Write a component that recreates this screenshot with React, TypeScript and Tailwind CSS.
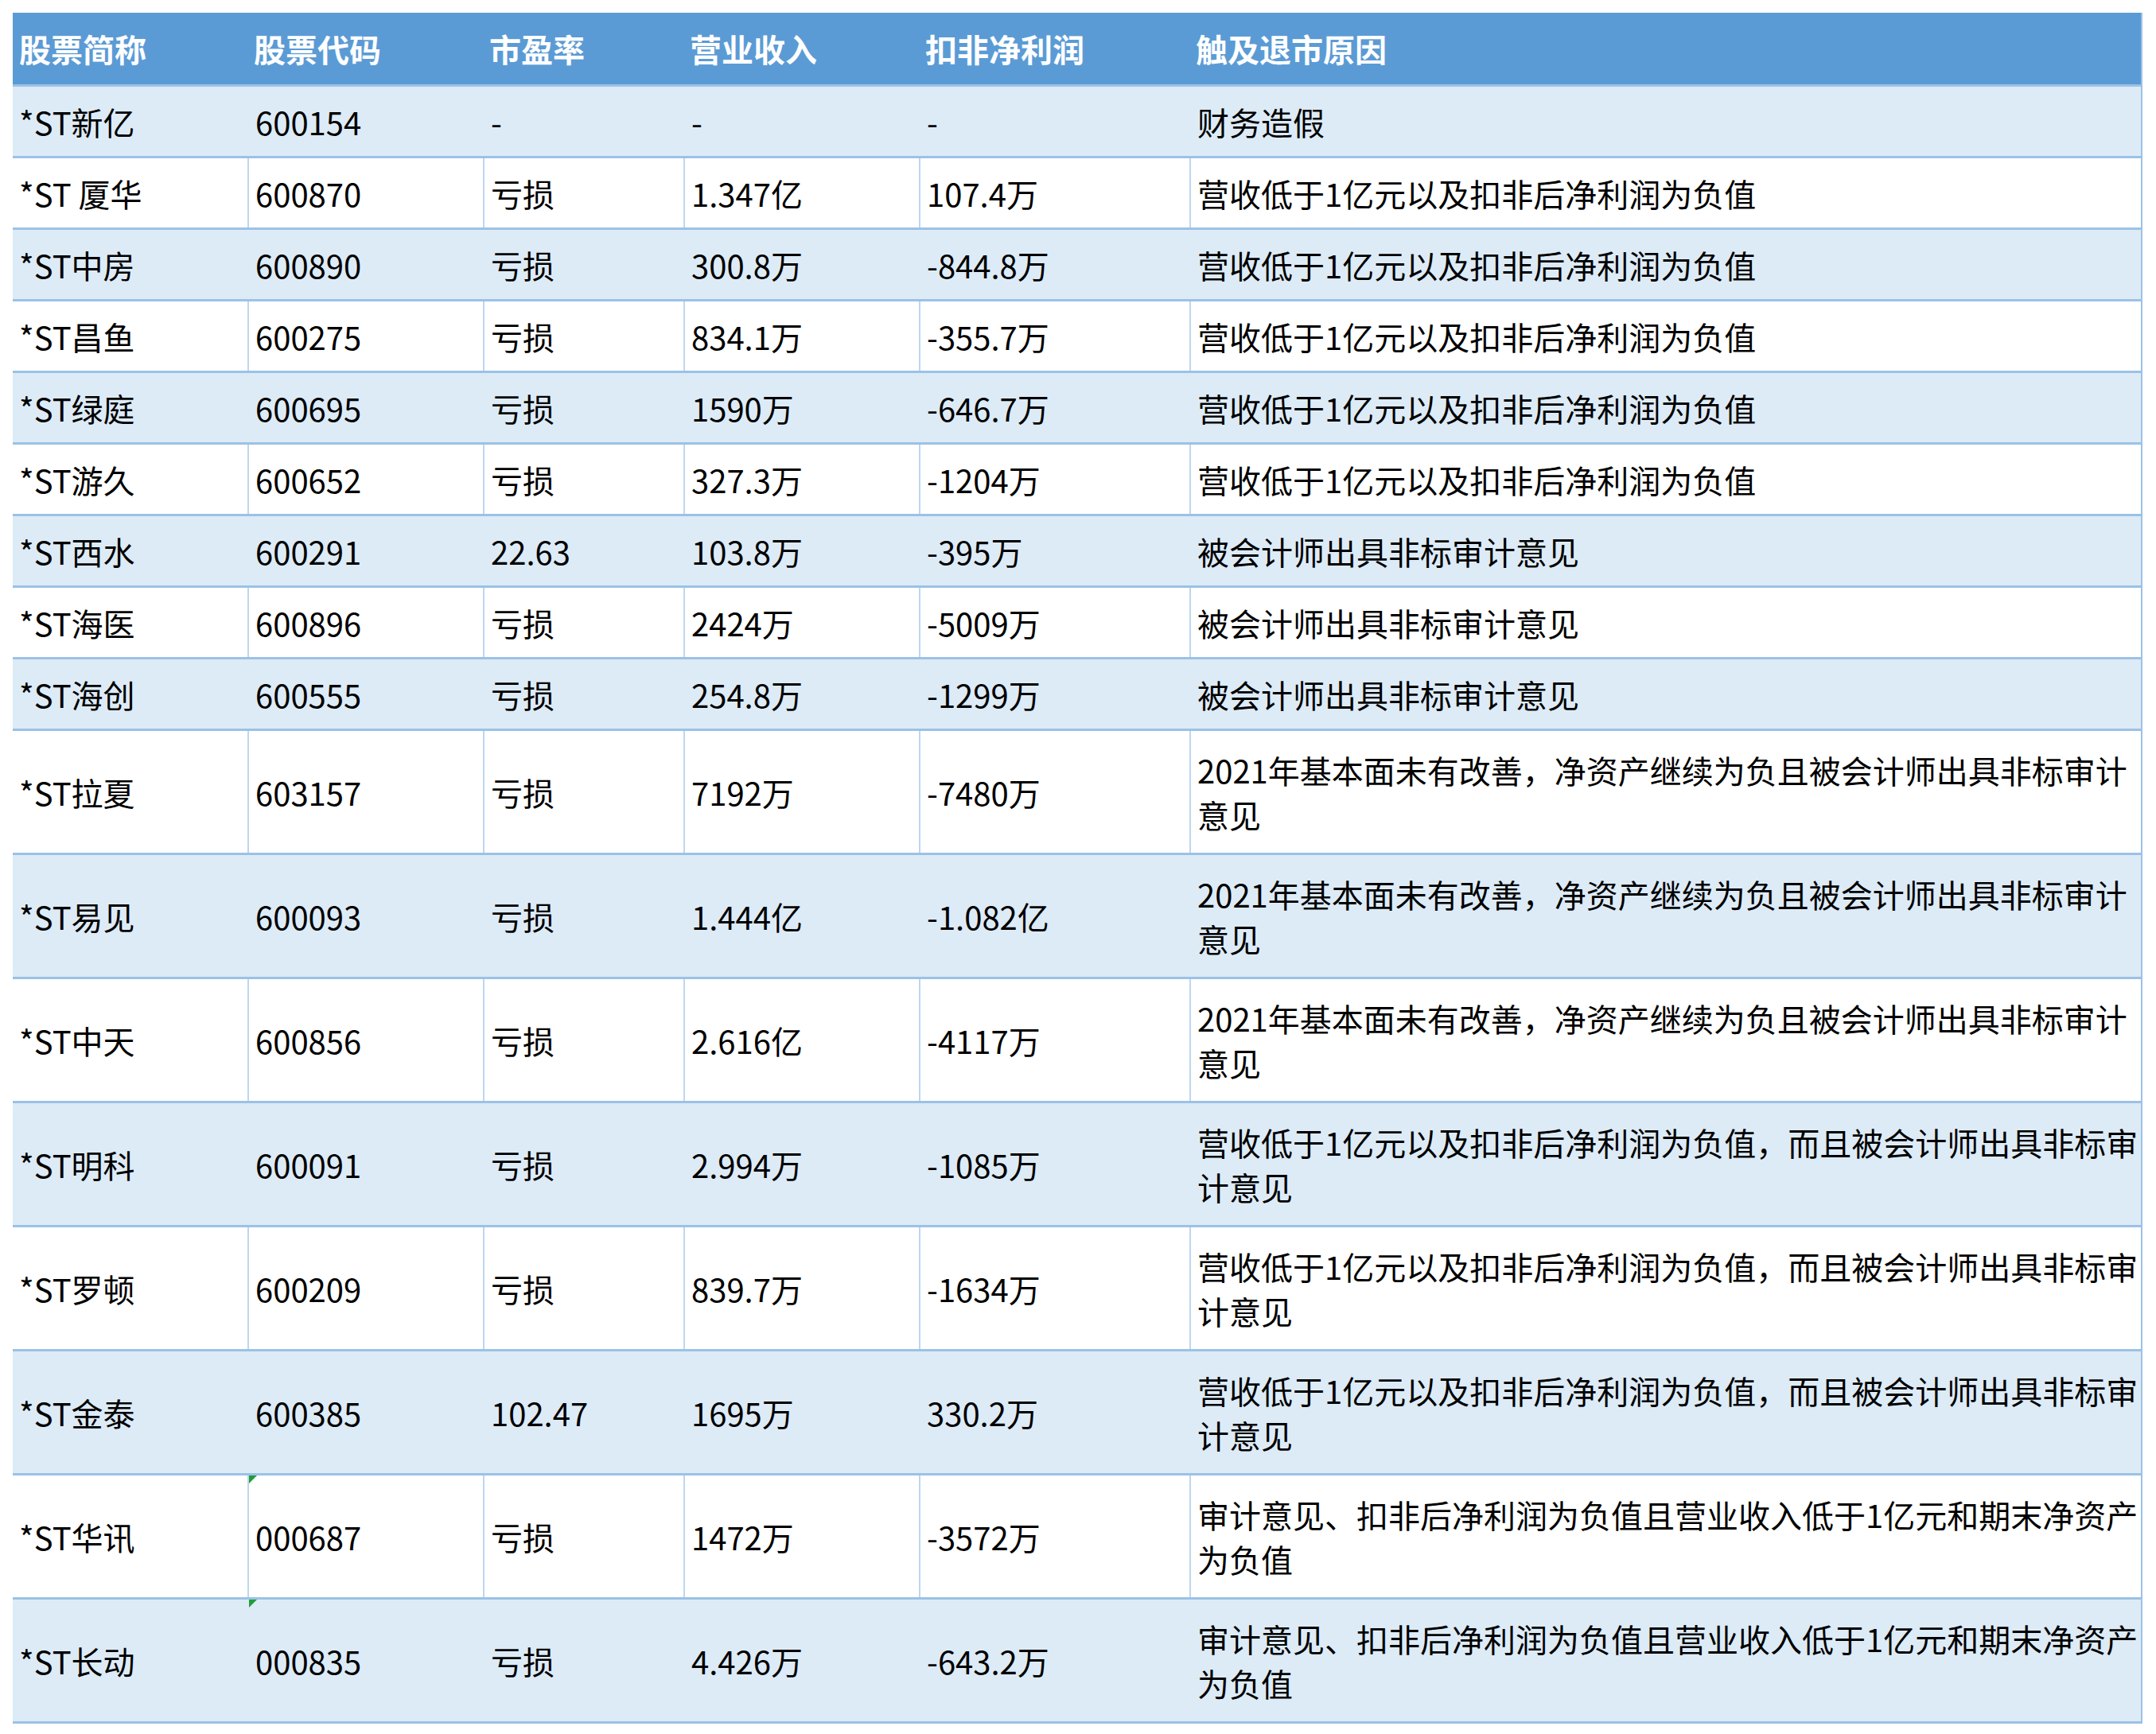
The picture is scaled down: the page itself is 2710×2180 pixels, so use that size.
import React from "react";

const rows: [string, string, string, string, string, string[], boolean?][] = [
  ["*ST新亿", "600154", "-", "-", "-", ["财务造假"]],
  ["*ST 厦华", "600870", "亏损", "1.347亿", "107.4万", ["营收低于1亿元以及扣非后净利润为负值"]],
  ["*ST中房", "600890", "亏损", "300.8万", "-844.8万", ["营收低于1亿元以及扣非后净利润为负值"]],
  ["*ST昌鱼", "600275", "亏损", "834.1万", "-355.7万", ["营收低于1亿元以及扣非后净利润为负值"]],
  ["*ST绿庭", "600695", "亏损", "1590万", "-646.7万", ["营收低于1亿元以及扣非后净利润为负值"]],
  ["*ST游久", "600652", "亏损", "327.3万", "-1204万", ["营收低于1亿元以及扣非后净利润为负值"]],
  ["*ST西水", "600291", "22.63", "103.8万", "-395万", ["被会计师出具非标审计意见"]],
  ["*ST海医", "600896", "亏损", "2424万", "-5009万", ["被会计师出具非标审计意见"]],
  ["*ST海创", "600555", "亏损", "254.8万", "-1299万", ["被会计师出具非标审计意见"]],
  ["*ST拉夏", "603157", "亏损", "7192万", "-7480万", ["2021年基本面未有改善，净资产继续为负且被会计师出具非标审计", "意见"]],
  ["*ST易见", "600093", "亏损", "1.444亿", "-1.082亿", ["2021年基本面未有改善，净资产继续为负且被会计师出具非标审计", "意见"]],
  ["*ST中天", "600856", "亏损", "2.616亿", "-4117万", ["2021年基本面未有改善，净资产继续为负且被会计师出具非标审计", "意见"]],
  ["*ST明科", "600091", "亏损", "2.994万", "-1085万", ["营收低于1亿元以及扣非后净利润为负值，而且被会计师出具非标审", "计意见"]],
  ["*ST罗顿", "600209", "亏损", "839.7万", "-1634万", ["营收低于1亿元以及扣非后净利润为负值，而且被会计师出具非标审", "计意见"]],
  ["*ST金泰", "600385", "102.47", "1695万", "330.2万", ["营收低于1亿元以及扣非后净利润为负值，而且被会计师出具非标审", "计意见"]],
  ["*ST华讯", "000687", "亏损", "1472万", "-3572万", ["审计意见、扣非后净利润为负值且营业收入低于1亿元和期末净资产", "为负值"], true],
  ["*ST长动", "000835", "亏损", "4.426万", "-643.2万", ["审计意见、扣非后净利润为负值且营业收入低于1亿元和期末净资产", "为负值"], true],
];

const widths = ["w-[295px]", "w-[296px]", "w-[252px]", "w-[296px]", "w-[340px]", "w-[1198px]"];
const heads = ["股票简称", "股票代码", "市盈率", "营业收入", "扣非净利润", "触及退市原因"];

export default function App() {
  return (
    <div className="w-[2710px] h-[2180px] bg-white pt-[16px] pl-[16px]" style={{ fontFamily: '"Noto Sans CJK SC", "Noto Sans", sans-serif' }}>
      <div className="w-[2677px] border-b-[3px] border-r-[2px] border-[#9bc2e6]">
        <div className="flex h-[90px] bg-[#5b9bd5] text-white font-bold text-[40px]">
          {heads.map((h, i) => (
            <div key={i} className={`${widths[i]} shrink-0 flex items-center pl-[8px]`}>{h}</div>
          ))}
        </div>
        {rows.map((r, ri) => {
          const blue = ri % 2 === 0;
          const two = r[5].length > 1;
          return (
            <div key={ri} className={`flex ${two ? "h-[156px]" : "h-[90px]"} border-t-[3px] border-[#9bc2e6] text-[40px] text-black ${blue ? "bg-[#ddebf7]" : "bg-white"}`}>
              {[r[0], r[1], r[2], r[3], r[4]].map((c, ci) => (
                <div key={ci} className={`${widths[ci]} shrink-0 relative flex items-center pl-[8px] ${ci > 0 && !blue ? "border-l-[2px] border-[#bdd7ee]" : ci > 0 ? "border-l-[2px] border-[#ddebf7]" : ""} leading-none`}>
                  {ci === 1 && r[6] ? <div className="absolute left-0 top-0 w-0 h-0 border-t-[10px] border-t-[#1f9d3a] border-r-[10px] border-r-transparent" /> : null}
                  {c}
                </div>
              ))}
              <div className={`${widths[5]} shrink-0 flex flex-col justify-center pl-[8px] whitespace-nowrap leading-[56px] ${!blue ? "border-l-[2px] border-[#bdd7ee]" : "border-l-[2px] border-[#ddebf7]"}`}>
                {r[5].map((l, li) => <div key={li}>{l}</div>)}
              </div>
            </div>
          );
        })}
      </div>
    </div>
  );
}
